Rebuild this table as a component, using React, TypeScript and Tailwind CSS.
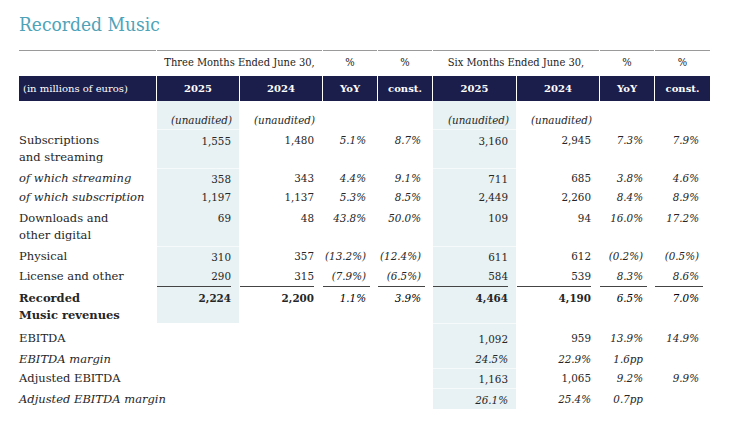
import React from "react";

type R = {
  label: string;
  h: string;
  pt: string;
  vals: string[];
  italicLabel?: boolean;
  bold?: boolean;
  underline?: boolean;
  noShade3?: boolean;
  italicNums?: boolean;
  lineTop?: boolean;
};

const rows: R[] = [
  { label: "Subscriptions\nand streaming", h: "h-[39px]", pt: "pt-[3px]", vals: ["1,555", "1,480", "5.1%", "8.7%", "3,160", "2,945", "7.3%", "7.9%"], lineTop: true },
  { label: "of which streaming", italicLabel: true, h: "h-[19px]", pt: "pt-[2px]", vals: ["358", "343", "4.4%", "9.1%", "711", "685", "3.8%", "4.6%"], lineTop: true },
  { label: "of which subscription", italicLabel: true, h: "h-[20px]", pt: "pt-[2px]", vals: ["1,197", "1,137", "5.3%", "8.5%", "2,449", "2,260", "8.4%", "8.9%"] },
  { label: "Downloads and\nother digital", h: "h-[39px]", pt: "pt-[3px]", vals: ["69", "48", "43.8%", "50.0%", "109", "94", "16.0%", "17.2%"] },
  { label: "Physical", h: "h-[20px]", pt: "pt-[2px]", vals: ["310", "357", "(13.2%)", "(12.4%)", "611", "612", "(0.2%)", "(0.5%)"], lineTop: true },
  { label: "License and other", h: "h-[21px]", pt: "pt-[2px]", vals: ["290", "315", "(7.9%)", "(6.5%)", "584", "539", "8.3%", "8.6%"], underline: true },
  { label: "Recorded\nMusic revenues", bold: true, h: "h-[36px]", pt: "pt-[3px]", vals: ["2,224", "2,200", "1.1%", "3.9%", "4,464", "4,190", "6.5%", "7.0%"] },
  { label: "EBITDA", noShade3: true, h: "h-[25px]", pt: "pt-[7px]", vals: ["", "", "", "", "1,092", "959", "13.9%", "14.9%"], lineTop: true },
  { label: "EBITDA margin", italicLabel: true, italicNums: true, noShade3: true, h: "h-[20px]", pt: "pt-[3px]", vals: ["", "", "", "", "24.5%", "22.9%", "1.6pp", ""] },
  { label: "Adjusted EBITDA", noShade3: true, h: "h-[20px]", pt: "pt-[2px]", vals: ["", "", "", "", "1,163", "1,065", "9.2%", "9.9%"], lineTop: true },
  { label: "Adjusted EBITDA margin", italicLabel: true, italicNums: true, noShade3: true, h: "h-[21px]", pt: "pt-[3px]", vals: ["", "", "", "", "26.1%", "25.4%", "0.7pp", ""], lineTop: true },
];

const SERIF = "font-['DejaVu_Serif',serif]";
const COND = "font-['DejaVu_Serif_Condensed','DejaVu_Serif',serif]";

function BodyRow({ r }: { r: R }) {
  return (
    <>
      <div
        className={`${r.h} ${r.pt} ${SERIF} whitespace-pre text-[11.5px] leading-[17px] text-[#262626] ${
          r.italicLabel ? "italic" : ""
        } ${r.bold ? "font-bold" : ""}`}
      >
        {r.label}
      </div>
      {r.vals.map((v, i) => {
        const pct = i % 4 >= 2;
        const shaded = i === 4 || (i === 0 && !r.noShade3);
        const bg = shaded ? "bg-[#e8f1f3]" : "";
        const line = shaded && r.lineTop ? "border-t border-[#f6fafb]" : "";
        const italic = pct || r.italicNums ? "italic" : "";
        const weight = r.bold ? (pct ? "text-black" : "font-bold") : "";
        if (r.underline) {
          return (
            <div key={i} className={`${r.h} ${bg}`}>
              <div
                className={`h-full border-b border-[#444] ${r.pt} ${pct ? "mr-[7px] pr-[4px]" : "mr-[8px]"} text-right ${COND} text-[11.5px] leading-[17px] text-[#262626] ${italic}`}
              >
                {v}
              </div>
            </div>
          );
        }
        return (
          <div
            key={i}
            className={`${r.h} ${r.pt} ${bg} ${line} ${pct ? "pr-[11px]" : "pr-[8px]"} text-right ${COND} text-[11.5px] leading-[17px] text-[#262626] ${italic} ${weight}`}
          >
            {v}
          </div>
        );
      })}
    </>
  );
}

export default function App() {
  const hdr1 = `h-[26px] border-t border-[#9a9a9a] flex items-center justify-center ${COND} text-[11px] text-[#222]`;
  const hdr2 = `h-[25px] bg-[#1b1e4b] flex items-center justify-center ${SERIF} text-[10px] font-bold text-white`;
  return (
    <div className="w-[729px] h-[431px] bg-white pl-[19px] pt-[12px]">
      <div className={`h-[24px] leading-[24px] ${COND} text-[19px] text-[#4ea3b9]`}>Recorded Music</div>
      <div className="mt-[14px] grid grid-cols-[137px_82px_82px_54px_54px_83px_82px_54px_55px] gap-x-px">
        {/* header row 1 */}
        <div className={hdr1}></div>
        <div className={`${hdr1} col-span-2`}>Three Months Ended June 30,</div>
        <div className={hdr1}>%</div>
        <div className={hdr1}>%</div>
        <div className={`${hdr1} col-span-2`}>Six Months Ended June 30,</div>
        <div className={hdr1}>%</div>
        <div className={hdr1}>%</div>
        {/* header row 2 */}
        <div className={`h-[25px] bg-[#1b1e4b] flex items-center pl-[4px] ${SERIF} text-[10px] text-white`}>
          (in millions of euros)
        </div>
        <div className={hdr2}>2025</div>
        <div className={hdr2}>2024</div>
        <div className={hdr2}>YoY</div>
        <div className={hdr2}>const.</div>
        <div className={hdr2}>2025</div>
        <div className={hdr2}>2024</div>
        <div className={hdr2}>YoY</div>
        <div className={hdr2}>const.</div>
        {/* unaudited row */}
        {["", "(unaudited)", "(unaudited)", "", "", "(unaudited)", "(unaudited)", "", ""].map((t, i) => (
          <div
            key={i}
            className={`h-[28px] pt-[11px] pr-[7px] text-right ${COND} italic text-[11.5px] leading-[17px] text-[#262626] ${
              i === 1 || i === 5 ? "bg-[#e8f1f3]" : ""
            }`}
          >
            {t}
          </div>
        ))}
        {rows.map((r, idx) => (
          <BodyRow key={idx} r={r} />
        ))}
      </div>
    </div>
  );
}
